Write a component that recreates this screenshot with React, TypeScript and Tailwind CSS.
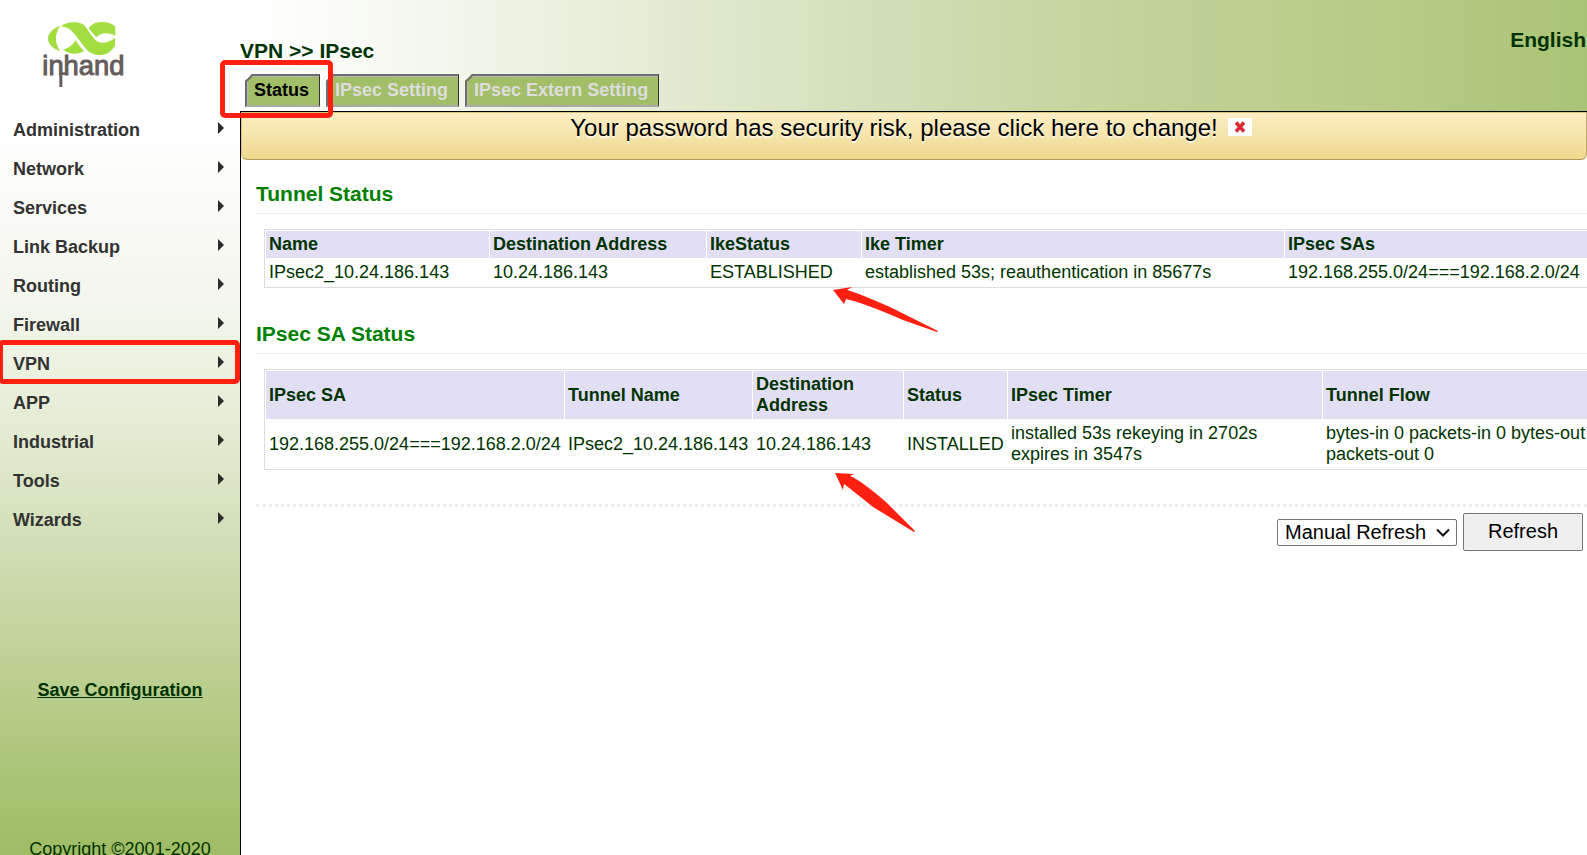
import { useState } from "react";

const menuItems = [
  "Administration",
  "Network",
  "Services",
  "Link Backup",
  "Routing",
  "Firewall",
  "VPN",
  "APP",
  "Industrial",
  "Tools",
  "Wizards",
];

const tabs = ["Status", "IPsec Setting", "IPsec Extern Setting"];

interface Column {
  label: string;
  width?: number;
}

interface StatusTableProps {
  title: string;
  columns: Column[];
  rows: string[][];
}

const tunnelColumns: Column[] = [
  { label: "Name", width: 223 },
  { label: "Destination Address", width: 216 },
  { label: "IkeStatus", width: 154 },
  { label: "Ike Timer", width: 422 },
  { label: "IPsec SAs" },
];

const tunnelRows = [
  [
    "IPsec2_10.24.186.143",
    "10.24.186.143",
    "ESTABLISHED",
    "established 53s; reauthentication in 85677s",
    "192.168.255.0/24===192.168.2.0/24",
  ],
];

const saColumns: Column[] = [
  { label: "IPsec SA", width: 298 },
  { label: "Tunnel Name", width: 187 },
  { label: "Destination Address", width: 150 },
  { label: "Status", width: 103 },
  { label: "IPsec Timer", width: 314 },
  { label: "Tunnel Flow" },
];

const saRows = [
  [
    "192.168.255.0/24===192.168.2.0/24",
    "IPsec2_10.24.186.143",
    "10.24.186.143",
    "INSTALLED",
    "installed 53s rekeying in 2702s expires in 3547s",
    "bytes-in 0 packets-in 0 bytes-out 0 packets-out 0",
  ],
];

const Logo = () => (
  <svg
    width="84"
    height="68"
    viewBox="126 60 252 204"
    role="img"
    aria-label="inhand"
  >
    <g fill="#a2de40">
      <path d="M181 77C160 84 143 100 144 116C145 132 158 146 180 153C171 140 167 126 168 112C169 98 174 86 181 77Z" />
      <path d="M183 79C193 69 212 65 230 67C244 68 254 76 262 88C271 102 280 115 290 123C305 133 325 129 345 113V137C335 154 320 164 303 165C284 166 267 158 255 143C243 128 232 110 220 98C211 88 199 80 183 79Z" />
      <path d="M189 148C205 146 217 136 227 121C234 132 242 143 252 153C240 160 224 163 211 160C202 158 195 154 189 148Z" />
      <path d="M266 85C274 72 288 66 304 66C322 66 336 70 346 80V108C337 102 327 99 314 100C303 101 296 106 290 112C281 104 274 95 266 85Z" />
    </g>
    <text
      x="127"
      y="224"
      fontSize="82"
      fill="#655c5c"
      stroke="#655c5c"
      strokeWidth="3"
      fontFamily="Liberation Sans, Arial, sans-serif"
    >
      inhand
    </text>
    <rect x="178" y="215" width="9" height="46" fill="#655c5c" />
    <rect x="178" y="217" width="22" height="8" fill="#655c5c" />
  </svg>
);

const Sidebar = () => (
  <aside className="flex w-60 shrink-0 flex-col bg-[linear-gradient(to_bottom,#ffffff_15%,#f3f6ec_36%,#e3ebd2_51%,#cfddb3_65%,#bed093_78%,#a9c475_91%,#a0bc65_100%)]">
    <div className="h-[111px] shrink-0 pt-5 pl-[42px]">
      <Logo />
    </div>
    <nav className="shrink-0">
      <ul>
        {menuItems.map((item) => (
          <li
            key={item}
            className="relative"
          >
            <a
              href="#"
              className="flex h-[39px] items-center justify-between pr-4 pl-[13px] font-bold text-[#333333]"
            >
              {item}
              <svg
                width="6"
                height="12"
                viewBox="0 0 6 12"
                className="mb-1.5"
              >
                <path
                  d="M0 0L6 6L0 12Z"
                  fill="#2b2b2b"
                />
              </svg>
            </a>
            {item === "VPN" && (
              <div className="pointer-events-none absolute -top-[5px] right-0 -left-0.5 h-11 rounded-[5px] border-[5px] border-[#ff2011]" />
            )}
          </li>
        ))}
      </ul>
    </nav>
    <a
      href="#"
      className="mt-[140px] text-center font-bold underline"
    >
      Save Configuration
    </a>
    <p className="mt-[138px] text-center whitespace-nowrap">
      Copyright ©2001-2020
    </p>
  </aside>
);

interface TabBarProps {
  active: string;
  onSelect: (tab: string) => void;
}

const TabBar = ({ active, onSelect }: TabBarProps) => (
  <div
    role="tablist"
    className="relative flex gap-1.5 pl-[5px]"
  >
    {tabs.map((tab) => (
      <button
        key={tab}
        role="tab"
        aria-selected={tab === active}
        onClick={() => onSelect(tab)}
        className="h-[33px] border-t-2 border-r border-b-2 border-l-2 border-t-[#6e6e6e] border-r-[#333333] border-b-[#a9a9a9] border-l-[#6e6e6e] bg-[#6e6e6e] [clip-path:polygon(7px_0,100%_0,100%_100%,0_100%,0_7px)]"
      >
        <span
          className={`flex h-full items-center border-t border-l border-[#b8b8b8] bg-[#a2be67] pr-2.5 pb-0.5 pl-1.5 font-bold [clip-path:polygon(6px_0,100%_0,100%_100%,0_100%,0_6px)] ${
            tab === active ? "text-black" : "text-[#dddddd]"
          }`}
        >
          {tab}
        </span>
      </button>
    ))}
    <div className="pointer-events-none absolute -top-[14px] -left-5 h-[58px] w-[113px] rounded-[5px] border-[5px] border-[#ff2011]" />
  </div>
);

const PasswordNotice = () => (
  <div className="flex h-12 items-start justify-center gap-2.5 rounded-b-[6px] border border-t-[#d8c27e] border-r-[#bda968] border-b-[#b09b60] border-l-[#d8c27e] bg-linear-to-b from-[#fdefc6] to-[#edd88d] pr-1.5 text-2xl text-black [text-shadow:0_2px_1px_#fffaf0]">
    <a
      href="#"
      className="leading-[30px]"
    >
      Your password has security risk, please click here to change!
    </a>
    <button
      aria-label="Close"
      className="mt-[5px] flex h-[18px] w-6 items-center justify-center bg-white"
    >
      <svg
        width="12"
        height="12"
        viewBox="0 0 12 12"
      >
        <path
          d="M2 1.5L10 10.5M10 1.5L2 10.5"
          stroke="#dc2832"
          strokeWidth="3.4"
        />
      </svg>
    </button>
  </div>
);

const StatusTable = ({ title, columns, rows }: StatusTableProps) => (
  <section className="pl-[15px]">
    <h2 className="border-b border-[#eeeeee] pb-[5px] text-[21px] leading-7 font-bold text-[#008000]">
      {title}
    </h2>
    <div className="mt-[15px] pl-2">
      <table className="w-full min-w-[1355px] table-fixed border-separate border-spacing-px border border-[#dddddd]">
        <colgroup>
          {columns.map(({ label, width }) => (
            <col
              key={label}
              style={{ width }}
            />
          ))}
        </colgroup>
        <thead>
          <tr>
            {columns.map(({ label }) => (
              <th
                key={label}
                className="bg-[#e2dff5] p-[3px] text-left font-bold"
              >
                {label}
              </th>
            ))}
          </tr>
        </thead>
        <tbody>
          {rows.map((row) => (
            <tr key={row[0]}>
              {row.map((cell, i) => (
                <td
                  key={i}
                  className="p-[3px]"
                >
                  {cell}
                </td>
              ))}
            </tr>
          ))}
        </tbody>
      </table>
    </div>
  </section>
);

const RefreshBar = () => (
  <div className="mt-[34px] ml-[15px] border-t-[3px] border-dotted border-[#eeeeee]">
    <div className="mt-1.5 flex items-center justify-end gap-1.5 pr-1 text-xl text-black">
      <div className="relative">
        <select
          aria-label="Refresh interval"
          className="block h-[27px] w-[180px] appearance-none rounded-[2px] border border-[#767676] bg-white pb-0.5 pl-[7px] leading-6"
        >
          <option>Manual Refresh</option>
        </select>
        <svg
          width="14"
          height="9"
          viewBox="0 0 14 9"
          fill="none"
          className="pointer-events-none absolute top-[9px] right-[7px]"
        >
          <path
            d="M1 1.5L7 7.5L13 1.5"
            stroke="#111111"
            strokeWidth="2"
          />
        </svg>
      </div>
      <button className="h-[38px] w-[120px] rounded-[2px] border border-[#767676] bg-[#efefef] pb-0.5">
        Refresh
      </button>
    </div>
  </div>
);

const Arrows = () => (
  <svg
    width="110"
    height="250"
    viewBox="0 0 110 250"
    fill="#ff2011"
    className="pointer-events-none absolute top-[285px] left-[830px]"
  >
    <path d="M3 5L22 2L17 5Q26 7 62 23L108 46L107 47L73 35Q34 18 16 14L14 19Z" />
    <path d="M5 188L24 189L20 191Q32 196 57 218L85 246L84 247L43 222Q22 205 14 199L13 205Z" />
  </svg>
);

export default function App() {
  const [activeTab, setActiveTab] = useState("Status");

  return (
    <div className="relative flex h-screen overflow-hidden bg-white font-['Liberation_Sans',Arial,sans-serif] text-[18px] leading-[21px] text-[#003300]">
      <Sidebar />
      <main className="flex min-w-0 flex-1 flex-col">
        <header className="h-28 border-b border-black bg-[linear-gradient(to_right,#ffffff_1%,#f5f8ef_13%,#e5edd7_29%,#d2dfb9_47%,#c3d49c_64%,#b6cb86_86%,#aac476_100%)]">
          <div className="flex items-start justify-between pt-7 pr-px text-[21px] leading-6 font-bold">
            <h1 className="pt-[11px]">VPN &gt;&gt; IPsec</h1>
            <a href="#">English</a>
          </div>
          <div className="mt-[11px]">
            <TabBar
              active={activeTab}
              onSelect={setActiveTab}
            />
          </div>
        </header>
        <div className="flex-1 border-l border-black">
          <PasswordNotice />
          <div className="flex flex-col gap-8 overflow-hidden pt-5">
            <StatusTable
              title="Tunnel Status"
              columns={tunnelColumns}
              rows={tunnelRows}
            />
            <StatusTable
              title="IPsec SA Status"
              columns={saColumns}
              rows={saRows}
            />
          </div>
          <RefreshBar />
        </div>
      </main>
      <Arrows />
    </div>
  );
}
